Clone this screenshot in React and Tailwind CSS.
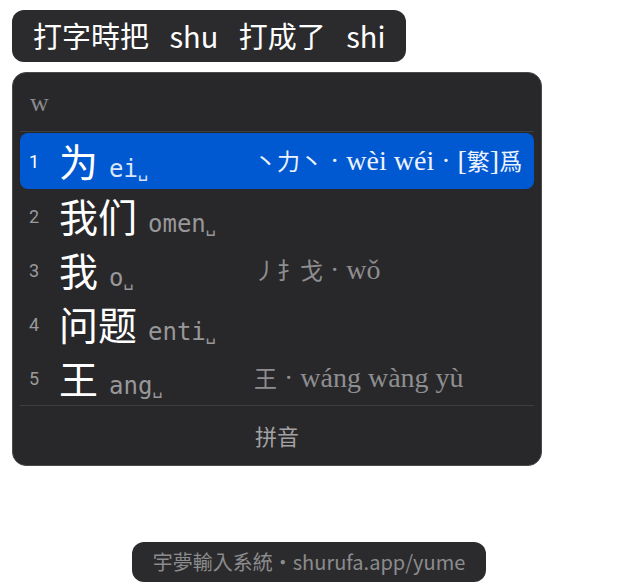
const sans = { fontFamily: '"Noto Sans CJK SC", "Noto Sans", sans-serif' };
const C = ({ children }) => (
  <span className="text-[23px]" style={{ fontFamily: '"Noto Sans CJK SC", sans-serif' }}>
    {children}
  </span>
);

const rows = [
  {
    n: 1,
    ch: '为',
    code: 'ei',
    note: (
      <>
        <C>丶力丶</C> · wèi wéi · [<C>繁</C>]<C>爲</C>
      </>
    ),
    active: true,
  },
  { n: 2, ch: '我们', code: 'omen', note: null },
  {
    n: 3,
    ch: '我',
    code: 'o',
    note: (
      <>
        <C>丿扌戈</C> · wǒ
      </>
    ),
  },
  { n: 4, ch: '问题', code: 'enti', note: null },
  {
    n: 5,
    ch: '王',
    code: 'ang',
    note: (
      <>
        <C>王</C> · wáng wàng yù
      </>
    ),
  },
];

function Row({ n, ch, code, note, active }) {
  return (
    <div
      className={
        'flex items-center rounded-lg ' +
        (active ? 'h-[56px] bg-[#0059d1]' : 'h-[54px]')
      }
    >
      <div className="flex w-[234px] items-center">
        <span
          className={
            'w-[39px] pl-[9px] text-[18px] ' + (active ? 'text-white' : 'text-[#9a9a9c]')
          }
          style={{ fontFamily: 'Roboto, "Noto Sans", sans-serif' }}
        >
          {n}
        </span>
        <div className="flex items-baseline">
          <span
            className="text-[39px] leading-none text-white"
            style={{ fontFamily: '"Noto Sans CJK SC", sans-serif' }}
          >
            {ch}
          </span>
          <span
            className={
              'ml-[11px] text-[24px] leading-none ' +
              (active ? 'text-[#dbe6fb]' : 'text-[#98989a]')
            }
            style={{ fontFamily: '"DejaVu Sans Mono", monospace' }}
          >
            {code}
            <span className="text-[17px]">␣</span>
          </span>
        </div>
      </div>
      {note && (
        <span
          className={
            'whitespace-nowrap text-[28px] leading-none ' +
            (active ? 'text-[#eef3ff]' : 'text-[#8e8e90]')
          }
          style={{ fontFamily: '"Liberation Serif", "Noto Sans CJK SC", serif' }}
        >
          {note}
        </span>
      )}
    </div>
  );
}

export default function App() {
  return (
    <div className="flex h-[584px] w-[618px] flex-col bg-white px-3 pt-[10px]">
      {/* caption */}
      <div
        className="flex h-[52px] items-center self-start rounded-xl bg-[#2b2b2d] px-[21px] text-[29px] text-white [word-spacing:14px]"
        style={{ fontFamily: '"Noto Sans CJK TC", "Noto Sans", sans-serif' }}
      >
        打字時把 shu 打成了 shi
      </div>

      {/* candidate panel */}
      <div className="mt-[10px] w-[530px] rounded-[14px] border border-[#4a4a4c] bg-[#28282a] px-[7px]">
        <div
          className="flex h-[58px] items-center pl-[10px] text-[26px] text-[#8a8a8c]"
          style={{ fontFamily: '"Liberation Serif", serif' }}
        >
          w
        </div>
        <div className="h-px bg-[#3e3e40]" />
        <div className="pt-px">
          {rows.map((r) => (
            <Row key={r.n} {...r} />
          ))}
        </div>
        <div className="h-px bg-[#3e3e40]" />
        <div
          className="flex h-[59px] items-center justify-center text-[22px] text-[#a2a2a4]"
          style={sans}
        >
          拼音
        </div>
      </div>

      {/* footer */}
      <div
        className="mt-[76px] flex h-[40px] items-center self-center rounded-xl bg-[#2b2b2d] px-[21px] text-[20px] text-[#8c8c8e]"
        style={{ fontFamily: '"Noto Sans CJK TC", "Noto Sans", sans-serif' }}
      >
        宇夢輸入系統・shurufa.app/yume
      </div>
    </div>
  );
}
